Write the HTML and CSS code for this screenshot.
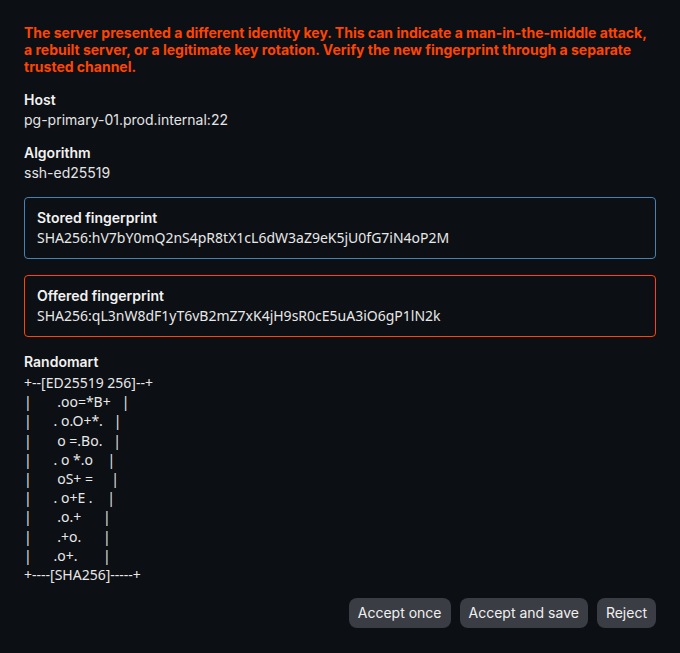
FILE: index.html
```html
<!DOCTYPE html>
<html lang="en">
<head>
    <meta charset="UTF-8">
    <meta name="viewport" content="width=device-width, initial-scale=1.0">
    <title>Host key changed</title>
    <link rel="stylesheet" href="styles.css">
</head>
<body>
    <div class="dialog">
        <p class="warning">The server presented a different identity key. This can indicate a man-in-the-middle attack, a rebuilt server, or a legitimate key rotation. Verify the new fingerprint through a separate trusted channel.</p>

        <div class="field">
            <div class="label">Host</div>
            <div class="value">pg-primary-01.prod.internal:22</div>
        </div>

        <div class="field">
            <div class="label">Algorithm</div>
            <div class="value">ssh-ed25519</div>
        </div>

        <div class="card stored">
            <div class="label">Stored fingerprint</div>
            <div class="fp">SHA256:hV7bY0mQ2nS4pR8tX1cL6dW3aZ9eK5jU0fG7iN4oP2M</div>
        </div>

        <div class="card offered">
            <div class="label">Offered fingerprint</div>
            <div class="fp">SHA256:qL3nW8dF1yT6vB2mZ7xK4jH9sR0cE5uA3iO6gP1lN2k</div>
        </div>

        <div class="field">
            <div class="label">Randomart</div>
<pre class="art">+--[ED25519 256]--+
|       .oo=*B+   |
|      . o.O+*.   |
|       o =.Bo.   |
|      . o *.o    |
|       oS+ =     |
|      . o+E .    |
|       .o.+      |
|       .+o.      |
|      .o+.       |
+----[SHA256]-----+</pre>
        </div>

        <div class="actions">
            <button type="button">Accept once</button>
            <button type="button">Accept and save</button>
            <button type="button">Reject</button>
        </div>
    </div>
</body>
</html>
```

FILE: styles.css
```css
body {
    margin: 0;
    background: #0c0f14;
    color: #e8e8e8;
    font-family: Inter, "Liberation Sans", sans-serif;
    font-size: 14px;
}

.dialog {
    padding: 24px;
    display: flex;
    flex-direction: column;
    gap: 16px;
}

.warning {
    margin: 0;
    color: #ff4500;
    font-weight: 700;
    line-height: 17px;
}

.field {
    display: flex;
    flex-direction: column;
    gap: 3px;
}

.label {
    font-weight: 600;
    color: #f2f2f2;
    line-height: 17px;
}

.value {
    line-height: 17px;
    color: #e4e4e4;
}

.card {
    border: 1px solid;
    border-radius: 4px;
    padding: 11px 12px;
    display: flex;
    flex-direction: column;
    gap: 2px;
}

.stored {
    border-color: #4682b4;
}

.offered {
    border-color: #ff4500;
}

.fp {
    font-family: "Noto Sans", "Open Sans", sans-serif;
    line-height: 19px;
    color: #e8e8e8;
}

.art {
    margin: 0;
    font-family: "Noto Sans", "Open Sans", sans-serif;
    font-size: 14px;
    line-height: 19.2px;
    color: #e8e8e8;
}

.actions {
    display: flex;
    justify-content: flex-end;
    gap: 9px;
    margin-top: -2px;
}

button {
    background: #3a3d43;
    color: #f0f0f0;
    border: none;
    border-radius: 8px;
    padding: 6px 9px;
    font-family: Inter, "Liberation Sans", sans-serif;
    font-size: 14px;
    line-height: 17.5px;
    cursor: pointer;
}
```
